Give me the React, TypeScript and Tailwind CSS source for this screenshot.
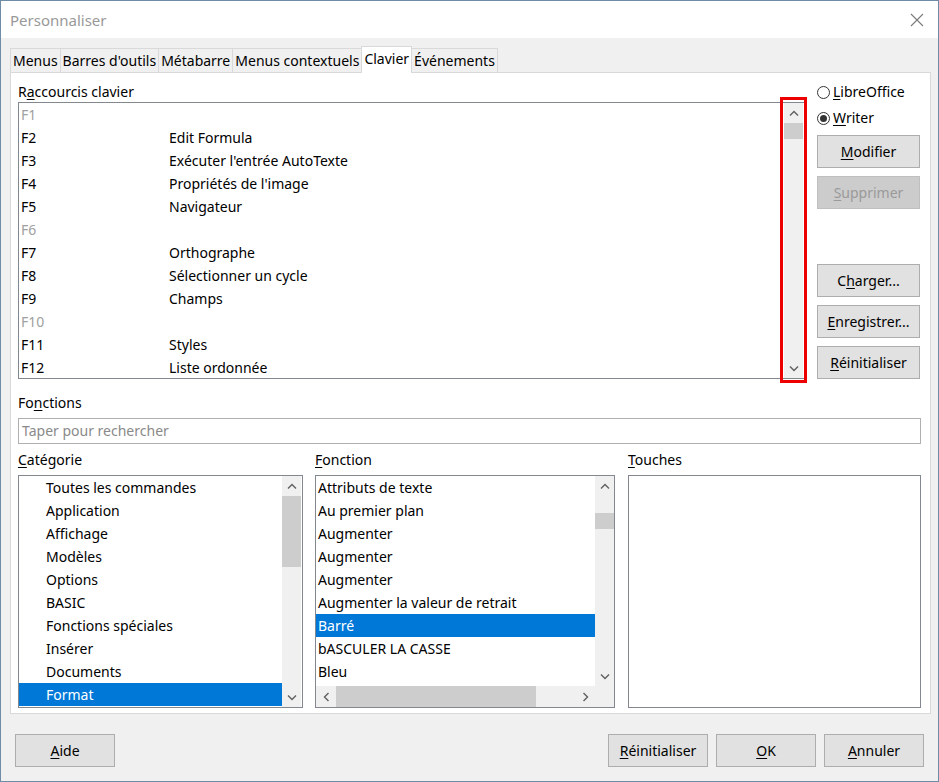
import React from 'react';

const keys = [
  { k: 'F1', f: '', off: true },
  { k: 'F2', f: 'Edit Formula' },
  { k: 'F3', f: "Exécuter l'entrée AutoTexte" },
  { k: 'F4', f: "Propriétés de l'image" },
  { k: 'F5', f: 'Navigateur' },
  { k: 'F6', f: '', off: true },
  { k: 'F7', f: 'Orthographe' },
  { k: 'F8', f: 'Sélectionner un cycle' },
  { k: 'F9', f: 'Champs' },
  { k: 'F10', f: '', off: true },
  { k: 'F11', f: 'Styles' },
  { k: 'F12', f: 'Liste ordonnée' },
];

const categories = [
  'Toutes les commandes',
  'Application',
  'Affichage',
  'Modèles',
  'Options',
  'BASIC',
  'Fonctions spéciales',
  'Insérer',
  'Documents',
  'Format',
];

const functions = [
  'Attributs de texte',
  'Au premier plan',
  'Augmenter',
  'Augmenter',
  'Augmenter',
  'Augmenter la valeur de retrait',
  'Barré',
  'bASCULER LA CASSE',
  'Bleu',
];

function Chevron({ dir }: { dir: 'up' | 'down' | 'left' | 'right' }) {
  const d = {
    up: 'M1 5.5 L5 1.5 L9 5.5',
    down: 'M1 1.5 L5 5.5 L9 1.5',
    left: 'M5.5 1 L1.5 5 L5.5 9',
    right: 'M1.5 1 L5.5 5 L1.5 9',
  }[dir];
  const w = dir === 'up' || dir === 'down' ? 10 : 7;
  const h = dir === 'up' || dir === 'down' ? 7 : 10;
  return (
    <svg width={w} height={h} viewBox={`0 0 ${w} ${h}`}>
      <path d={d} fill="none" stroke="#606060" strokeWidth="1.4" />
    </svg>
  );
}

// underline one letter, like a Windows mnemonic
function Mn({ text, at }: { text: string; at: number }) {
  return (
    <>
      {text.slice(0, at)}
      <span className="underline underline-offset-2">{text[at]}</span>
      {text.slice(at + 1)}
    </>
  );
}

function Btn({ text, at, disabled, w = 'w-[103px]' }: { text: string; at: number; disabled?: boolean; w?: string }) {
  return (
    <div
      className={`${w} h-[33px] flex items-center justify-center border ${
        disabled ? 'bg-[#cccccc] border-[#bfbfbf] text-[#9a9a9a]' : 'bg-[#e1e1e1] border-[#adadad] text-black'
      }`}
    >
      <Mn text={text} at={at} />
    </div>
  );
}

function Radio({ label, checked }: { label: string; checked?: boolean }) {
  return (
    <div className="flex items-center h-[26px]">
      <div className="w-[13px] h-[13px] rounded-full border border-[#333333] bg-white flex items-center justify-center">
        {checked && <div className="w-[7px] h-[7px] rounded-full bg-[#333333]" />}
      </div>
      <span className="ml-[3px]">
        <Mn text={label} at={0} />
      </span>
    </div>
  );
}

function VScroll({ w, thumbTop, thumbH }: { w: string; thumbTop: number; thumbH: number }) {
  return (
    <div className={`${w} h-full bg-[#f0f0f0] flex flex-col`}>
      <div className="h-[20px] flex items-center justify-center shrink-0">
        <Chevron dir="up" />
      </div>
      <div className="flex-1 relative">
        <div className="absolute left-0 right-0 bg-[#cdcdcd]" style={{ top: thumbTop, height: thumbH }} />
      </div>
      <div className="h-[20px] flex items-center justify-center shrink-0">
        <Chevron dir="down" />
      </div>
    </div>
  );
}

export default function App() {
  return (
    <div className="w-[939px] h-[782px] border border-[#6f8ba5] bg-[#f0f0f0] flex flex-col text-[14px] text-black font-['Noto_Sans','DejaVu_Sans',sans-serif] leading-[20px] overflow-hidden">
      {/* title bar */}
      <div className="h-[37px] bg-white flex items-center justify-between shrink-0">
        <span className="ml-[9px] text-[15px] text-[#999999]">Personnaliser</span>
        <svg width="14" height="14" viewBox="0 0 14 14" className="mr-[14px]">
          <path d="M1 1 L13 13 M13 1 L1 13" stroke="#7a7a7a" strokeWidth="1.1" />
        </svg>
      </div>

      {/* tabs */}
      <div className="pl-[9px] pt-[8px]">
        <div className="flex items-end h-[26px]">
          {['Menus', "Barres d'outils", 'Métabarre', 'Menus contextuels', 'Clavier', 'Événements'].map((t) =>
            t === 'Clavier' ? (
              <div key={t} className="relative z-10 -ml-px h-[27px] -mb-px px-[2px] pb-[2px] bg-white border border-b-0 border-[#d9d9d9] flex items-center">
                {t}
              </div>
            ) : (
              <div key={t} className="-ml-px first:ml-0 h-[24px] px-[2px] pt-px bg-[#f0f0f0] border border-b-0 border-[#d9d9d9] flex items-center">
                {t}
              </div>
            )
          )}
        </div>

        {/* panel */}
        <div className="w-[921px] h-[642px] bg-white border border-[#d9d9d9] pl-[7px] pr-[8px]">
          <div className="flex">
            <div className="w-[787px]">
              <div className="mt-[9px] h-[20px]">
                R<span className="underline underline-offset-2">a</span>ccourcis clavier
              </div>
              <div className="relative h-[277px] border border-[#828790] flex">
                <div className="flex-1">
                  {keys.map((r) => (
                    <div key={r.k} className="h-[23px] flex items-center">
                      <span className={`w-[150px] pl-[2px] ${r.off ? 'text-[#a0a0a0]' : ''}`}>{r.k}</span>
                      <span>{r.f}</span>
                    </div>
                  ))}
                </div>
                <VScroll w="w-[19px] mr-px" thumbTop={0} thumbH={16} />
                <div className="absolute left-[761px] -top-[6px] w-[27px] h-[286px] border-[3px] border-[#ee0000] pointer-events-none" />
              </div>
            </div>

            <div className="ml-[12px] w-[103px] pt-[6px]">
              <Radio label="LibreOffice" />
              <Radio label="Writer" checked />
              <div className="mt-[4px] flex flex-col gap-[8px]">
                <Btn text="Modifier" at={0} />
                <Btn text="Supprimer" at={0} disabled />
              </div>
              <div className="mt-[55px] flex flex-col gap-[8px]">
                <Btn text="Charger..." at={1} />
                <Btn text="Enregistrer..." at={0} />
                <Btn text="Réinitialiser" at={0} />
              </div>
            </div>
          </div>

          <div className="mt-[14px] h-[20px]">
            <Mn text="Fonctions" at={2} />
          </div>
          <div className="mt-[5px] w-[903px] h-[26px] border border-[#b0b0b0] flex items-center px-[3px] text-[#8a8a8a]">
            Taper pour rechercher
          </div>

          <div className="mt-[6px] flex">
            {/* Catégorie */}
            <div className="w-[285px]">
              <div className="h-[20px]">
                <Mn text="Catégorie" at={0} />
              </div>
              <div className="mt-[5px] h-[233px] border border-[#828790] flex">
                <div className="flex-1 overflow-hidden">
                  {categories.map((c) => (
                    <div
                      key={c}
                      className={`h-[23px] flex items-center pl-[27px] ${c === 'Format' ? 'bg-[#0078d7] text-white' : ''}`}
                    >
                      {c}
                    </div>
                  ))}
                </div>
                <VScroll w="w-[19px] mr-px" thumbTop={0} thumbH={71} />
              </div>
            </div>

            {/* Fonction */}
            <div className="ml-[12px] w-[300px]">
              <div className="h-[20px]">
                <Mn text="Fonction" at={0} />
              </div>
              <div className="mt-[5px] h-[233px] border border-[#828790] flex flex-col">
                <div className="flex-1 flex min-h-0">
                  <div className="flex-1 overflow-hidden">
                    {functions.map((f, i) => (
                      <div
                        key={i}
                        className={`h-[23px] flex items-center pl-[2px] whitespace-nowrap ${f === 'Barré' ? 'bg-[#0078d7] text-white' : ''}`}
                      >
                        {f}
                      </div>
                    ))}
                  </div>
                  <VScroll w="w-[19px]" thumbTop={17} thumbH={16} />
                </div>
                <div className="h-[21px] flex bg-[#f0f0f0] shrink-0">
                  <div className="w-[20px] flex items-center justify-center">
                    <Chevron dir="left" />
                  </div>
                  <div className="flex-1 flex items-stretch">
                    <div className="w-[200px] bg-[#cdcdcd]" />
                  </div>
                  <div className="w-[20px] flex items-center justify-center">
                    <Chevron dir="right" />
                  </div>
                  <div className="w-[19px] bg-[#f0f0f0]" />
                </div>
              </div>
            </div>

            {/* Touches */}
            <div className="ml-[13px] w-[293px]">
              <div className="h-[20px]">
                <Mn text="Touches" at={0} />
              </div>
              <div className="mt-[5px] h-[233px] border border-[#828790]" />
            </div>
          </div>
        </div>
      </div>

      {/* bottom buttons */}
      <div className="mt-[20px] flex pl-[14px] pr-[14px]">
        <Btn text="Aide" at={0} w="w-[100px]" />
        <div className="flex-1" />
        <div className="flex gap-[8px]">
          <Btn text="Réinitialiser" at={0} w="w-[100px]" />
          <Btn text="OK" at={0} w="w-[100px]" />
          <Btn text="Annuler" at={0} w="w-[100px]" />
        </div>
      </div>
    </div>
  );
}
